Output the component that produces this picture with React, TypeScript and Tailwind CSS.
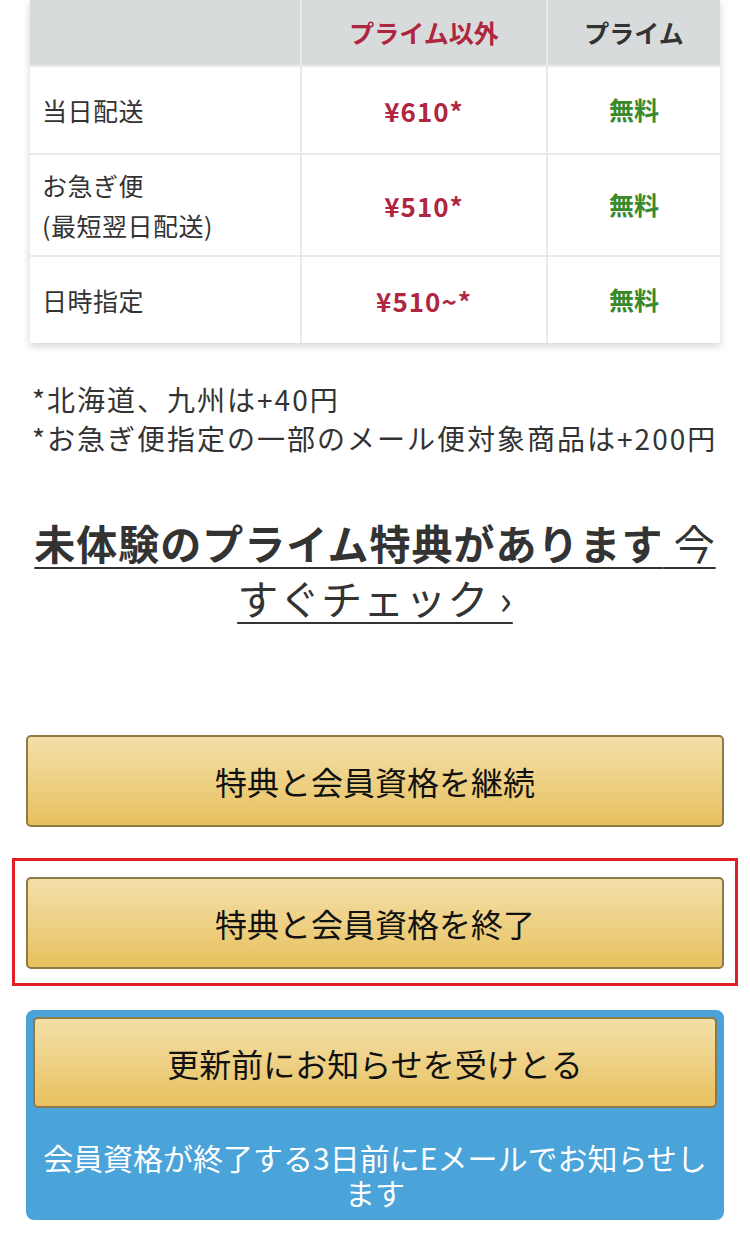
import React from 'react';

const font = { fontFamily: '"Noto Sans CJK JP", "Noto Sans", sans-serif' };

interface Row {
  label: React.ReactNode;
  price: string;
  height: string;
}

const rows: Row[] = [
  { label: '当日配送', price: '¥610*', height: 'h-[86px]' },
  {
    label: (
      <>
        お急ぎ便
        <br />
        (最短翌日配送)
      </>
    ),
    price: '¥510*',
    height: 'h-[100px]',
  },
  { label: '日時指定', price: '¥510~*', height: 'h-[86px]' },
];

const GoldButton: React.FC<{ children: React.ReactNode; className?: string }> = ({ children, className = '' }) => (
  <button
    type="button"
    className={`w-full flex items-center justify-center rounded-[5px] border-2 border-[#8d7a44] bg-gradient-to-b from-[#f3e0a8] to-[#e8c15d] text-[32px] text-[#111] ${className}`}
  >
    {children}
  </button>
);

export default function App() {
  return (
    <div className="w-[750px] min-h-[1244px] bg-white text-[#333]" style={font}>
      {/* shipping fee table */}
      <div className="mx-[30px] bg-[#e9e9e9] shadow-[0_3px_8px_rgba(0,0,0,0.18)] grid grid-cols-[270px_244px_172px] gap-[2px]">
        <div className="h-[65px] bg-[#d8dbdc]" />
        <div className="h-[65px] bg-[#d8dbdc] flex items-center justify-center font-bold text-[25px] text-[#b0263f]">
          プライム以外
        </div>
        <div className="h-[65px] bg-[#d8dbdc] flex items-center justify-center font-bold text-[25px] text-[#333]">
          プライム
        </div>
        {rows.map((r, i) => (
          <React.Fragment key={i}>
            <div className={`${r.height} bg-white flex items-center pl-[12px] text-[25px] leading-[40px] text-[#333] tracking-[0.5px]`}>
              <div>{r.label}</div>
            </div>
            <div className={`${r.height} bg-white flex items-center justify-center font-bold text-[26px] text-[#b0263f] tracking-[1px]`}>
              {r.price}
            </div>
            <div className={`${r.height} bg-white flex items-center justify-center font-bold text-[25px] text-[#3a8a2b]`}>
              無料
            </div>
          </React.Fragment>
        ))}
      </div>

      {/* notes */}
      <div className="mt-[37px] mx-[32px] text-[28px] leading-[39px] tracking-[2px] text-[#333]">
        <p>*北海道、九州は+40円</p>
        <p>*お急ぎ便指定の一部のメール便対象商品は+200円</p>
      </div>

      {/* prime benefits link */}
      <div className="mt-[57px] mx-[30px] text-center text-[41px] leading-[55px] tracking-[1px] text-[#333]">
        <a className="underline decoration-2 underline-offset-[7px] decoration-[#333]">
          <span className="font-bold">未体験のプライム特典があります</span> 今すぐチェック ›
        </a>
      </div>

      <div className="mt-[110px] mx-[26px]">
        <GoldButton className="h-[92px]">特典と会員資格を継続</GoldButton>
      </div>

      <div className="mt-[31px] mx-[12px] border-[3px] border-[#e21f26] px-[11px] pt-[16px] pb-[14px]">
        <GoldButton className="h-[92px]">特典と会員資格を終了</GoldButton>
      </div>

      <div className="mt-[24px] mx-[26px] rounded-[8px] bg-[#4aa3d9] p-[7px] pb-[10px]">
        <GoldButton className="h-[91px]">更新前にお知らせを受けとる</GoldButton>
        <p className="mt-[32px] text-center text-white text-[30px] leading-[35px]">
          会員資格が終了する3日前にEメールでお知らせします
        </p>
      </div>
    </div>
  );
}
